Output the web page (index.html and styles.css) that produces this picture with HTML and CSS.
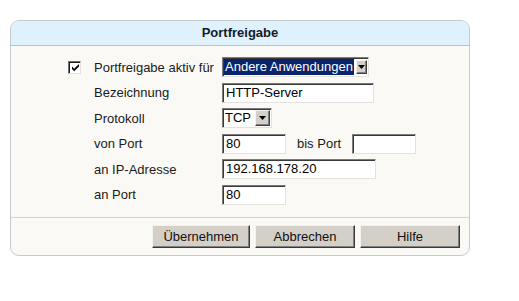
FILE: index.html
```html
<!DOCTYPE html>
<html lang="de">
<head>
    <meta charset="UTF-8">
    <title>Portfreigabe</title>
    <link rel="stylesheet" href="styles.css">
</head>
<body>
    <div class="panel">
        <div class="panel-head">Portfreigabe</div>
        <div class="panel-body">
            <div class="form">
                <span class="check">
                    <svg width="9" height="9" viewBox="0 0 9 9"><path d="M1 3.5 L3.2 5.8 L8 1 L8 3.5 L3.2 8.3 L1 6 Z" fill="#000"/></svg>
                </span>
                <span class="label">Portfreigabe aktiv für</span>
                <div class="select select-app">
                    <span class="select-value is-selected">Andere Anwendungen</span>
                    <span class="select-btn"><svg width="7" height="4" viewBox="0 0 7 4"><path d="M0 0 H7 L3.5 4 Z" fill="#000"/></svg></span>
                </div>

                <span></span>
                <span class="label">Bezeichnung</span>
                <div class="field field-wide">HTTP-Server</div>

                <span></span>
                <span class="label">Protokoll</span>
                <div class="select select-proto">
                    <span class="select-value">TCP</span>
                    <span class="select-btn"><svg width="7" height="4" viewBox="0 0 7 4"><path d="M0 0 H7 L3.5 4 Z" fill="#000"/></svg></span>
                </div>

                <span></span>
                <span class="label">von Port</span>
                <div class="port-range">
                    <div class="field field-port">80</div>
                    <span class="label">bis Port</span>
                    <div class="field field-port"></div>
                </div>

                <span></span>
                <span class="label">an IP-Adresse</span>
                <div class="field field-ip">192.168.178.20</div>

                <span></span>
                <span class="label">an Port</span>
                <div class="field field-port">80</div>
            </div>
        </div>
        <div class="panel-foot">
            <button class="btn btn-first">Übernehmen</button>
            <button class="btn">Abbrechen</button>
            <button class="btn">Hilfe</button>
        </div>
    </div>
</body>
</html>
```

FILE: styles.css
```css
body {
    margin: 0;
    padding: 20px 0 0 10px;
    background-color: #fff;
    font-family: 'Liberation Sans', Arial, sans-serif;
    font-size: 13px;
    color: #000;
}
.panel {
    width: 458px;
    border: 1px solid #c3cbcf;
    border-radius: 9px;
    background-color: #fbf9f6;
    overflow: hidden;
}
.panel-head {
    height: 24px;
    line-height: 24px;
    background-color: #dff1fc;
    border-bottom: 1px solid #b9c5cc;
    text-align: center;
    font-weight: bold;
    color: #141a24;
}
.panel-body {
    padding: 11px 0 12px 57px;
    border-bottom: 1px solid #d6d4d0;
}
.form {
    display: grid;
    grid-template-columns: 26px 128px auto;
    grid-auto-rows: 20px;
    row-gap: 5.6px;
    align-items: center;
}
.label {
    color: #1a1a1a;
    white-space: nowrap;
}
.check {
    box-sizing: border-box;
    width: 13px;
    height: 13px;
    border: 1px solid;
    border-color: #6e6e6e #e4e2dd #e4e2dd #6e6e6e;
    box-shadow: inset 1px 1px 0 #1c1c1c;
    background-color: #fff;
    display: flex;
    align-items: center;
    justify-content: center;
    padding: 1px 0 0 1px;
}
.field {
    box-sizing: border-box;
    height: 20px;
    line-height: 17px;
    padding: 0 3px;
    background-color: #fff;
    border: 1px solid;
    border-color: #7b7b7b #e4e2dd #e4e2dd #7b7b7b;
    box-shadow: inset 1px 1px 0 #3a3a3a;
}
.field-wide {
    width: 152px;
}
.field-port {
    width: 64px;
}
.field-ip {
    width: 154px;
}
.port-range {
    display: flex;
    align-items: center;
    gap: 11px;
}
.port-range .field {
    flex: none;
}
.select {
    box-sizing: border-box;
    height: 20px;
    display: flex;
    align-items: stretch;
    padding: 1px;
    background-color: #fff;
    border: 1px solid;
    border-color: #7b7b7b #e4e2dd #e4e2dd #7b7b7b;
    box-shadow: inset 1px 1px 0 #3a3a3a;
}
.select-app {
    width: 147px;
}
.select-app .select-value {
    flex: none;
    width: 130px;
    margin-right: 2px;
}
.select-app .select-btn {
    width: 9px;
    margin: 1px 0 1px;
}
.select-proto {
    width: 50px;
}
.select-value {
    flex: 1;
    padding: 0 1px;
    line-height: 16px;
    white-space: nowrap;
    overflow: hidden;
    box-sizing: border-box;
}
.select-value.is-selected {
    background-color: #0a246a;
    color: #fff;
}
.select-btn {
    width: 13px;
    background-color: #d4d0c8;
    border: 1px solid;
    border-color: #f4f3ef #404040 #404040 #f4f3ef;
    box-shadow: inset -1px -1px 0 #808080;
    display: flex;
    align-items: center;
    justify-content: center;
}
.panel-foot {
    display: flex;
    justify-content: flex-end;
    padding: 7px 9px 7px 0;
    gap: 5px;
}
.btn {
    width: 100px;
    height: 23px;
    padding: 0;
    font-family: inherit;
    font-size: 13px;
    color: #111;
    background-color: #d4d0c8;
    border: 1px solid;
    border-color: #f4f3ef #3a3a3a #3a3a3a #f4f3ef;
    box-shadow: inset -1px -1px 0 #808080;
}
.btn-first {
    width: 98px;
}
```
